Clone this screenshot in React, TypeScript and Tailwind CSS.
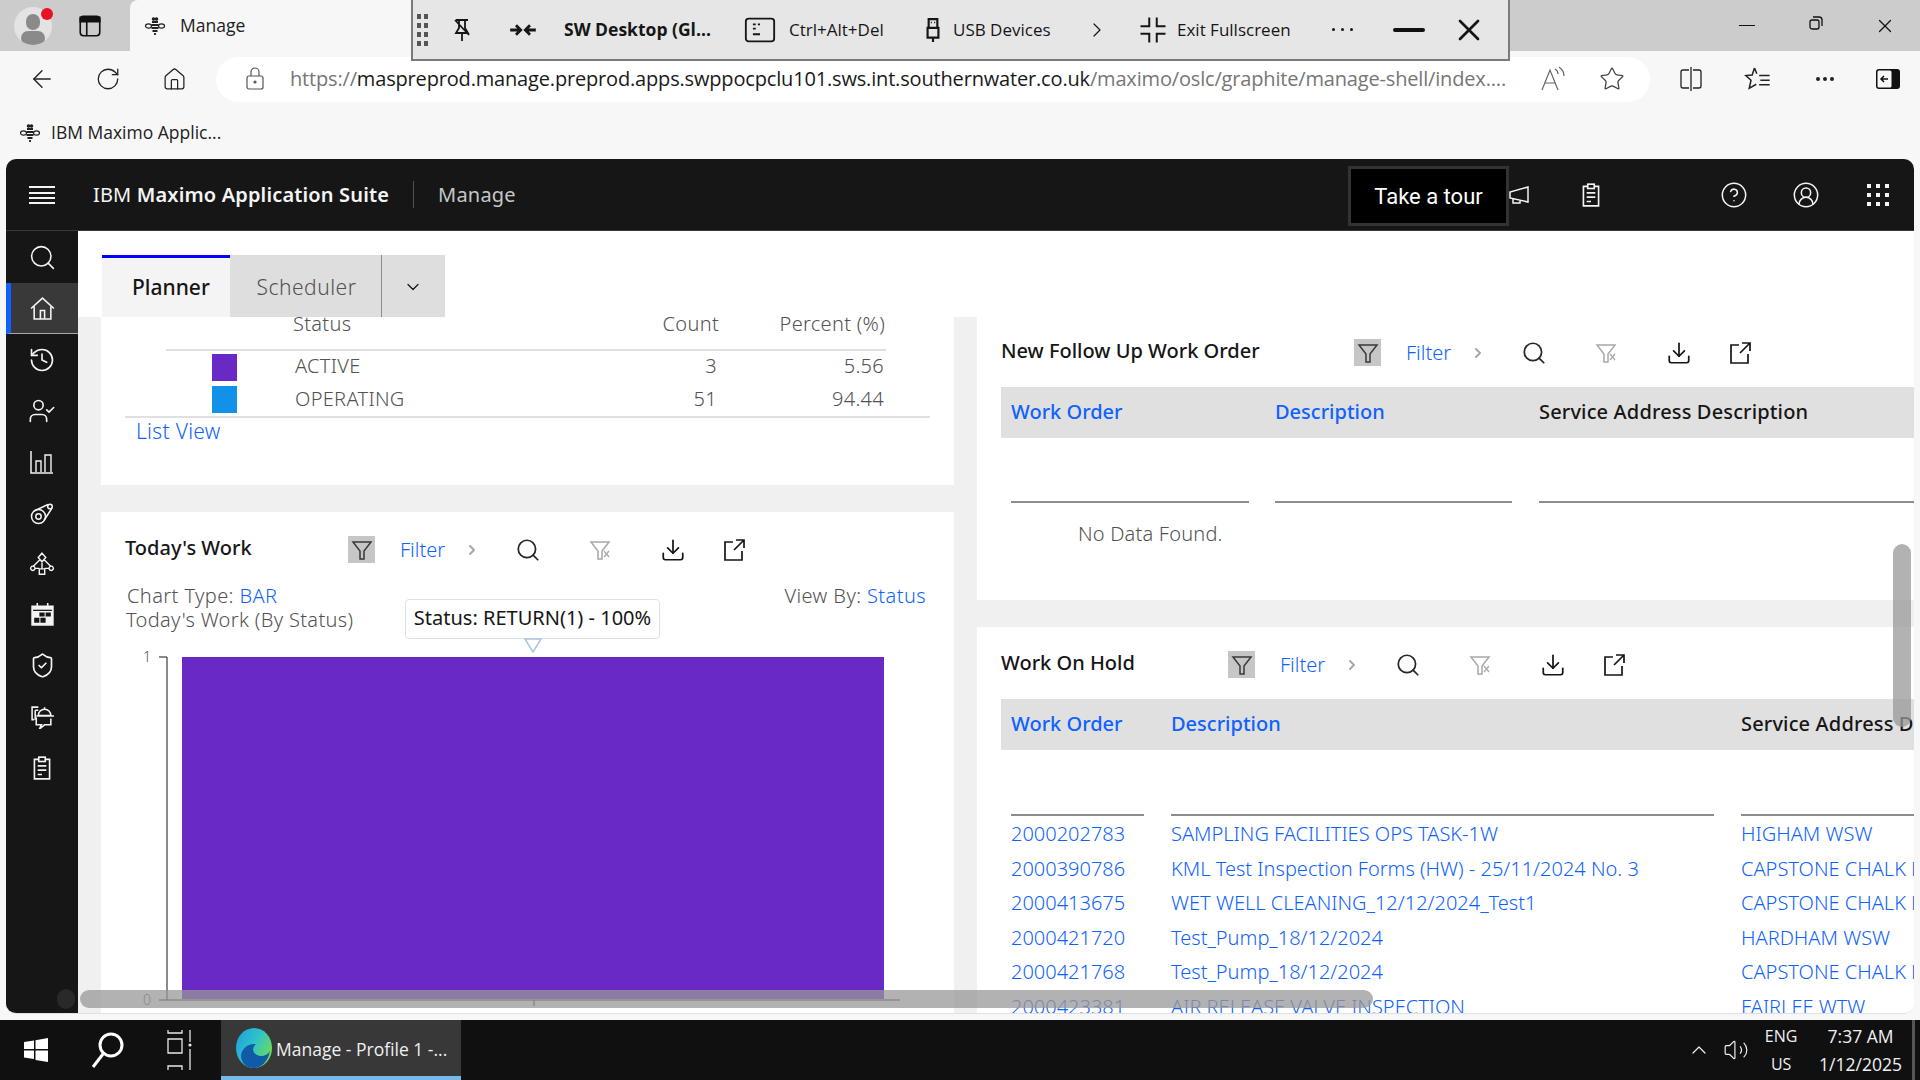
import type { ReactNode } from "react";
import {
  ArrowLeft,
  ChevronDown,
  ChevronRight,
  ChevronUp,
  CircleHelp,
  CircleUserRound,
  Download,
  History,
  Home,
  MoreHorizontal,
  RotateCw,
  Search,
  ShieldCheck,
  Star,
  UserCheck,
  Volume2,
  X,
} from "lucide-react";

const Svg = ({ size = 24, children, className }: { size?: number; children: ReactNode; className?: string }) => (
  <svg width={size} height={size} viewBox="0 0 24 24" fill="none" stroke="currentColor" strokeWidth={1.5} className={className}>
    {children}
  </svg>
);

const Bee = () => (
  <Svg size={24}>
    <g strokeWidth={1.2}>
      <ellipse cx="5.5" cy="12" rx="3" ry="2.2" />
      <ellipse cx="18.5" cy="12" rx="3" ry="2.2" />
      <path d="M9 8h6M8.5 11h7M8.5 14h7M9.5 17h5M12 19v2" strokeWidth={1.8} />
      <circle cx="10.5" cy="5" r="1.2" fill="currentColor" />
      <circle cx="13.5" cy="5" r="1.2" fill="currentColor" />
    </g>
  </Svg>
);

const ClipboardIcon = ({ size = 24 }: { size?: number }) => (
  <Svg size={size}>
    <path d="M9 4H5v18h14V4h-4" />
    <rect x="9" y="2" width="6" height="4" />
    <path d="M8 10h8M8 14h8M8 18h4" />
  </Svg>
);

const sideIcons: ReactNode[] = [
  <Search size={29} strokeWidth={1.3} />,
  <Svg size={25}>
    <path d="M1 12 12 2l11 10M4 10v12h16V10M10 22v-8h4v8" />
  </Svg>,
  <History size={28} strokeWidth={1.4} />,
  <UserCheck size={28} strokeWidth={1.4} />,
  <Svg size={24}>
    <path d="M1 1v22h22" />
    <path d="M6 22V11h5v11M15 22V5h6v17" strokeWidth={1.4} />
  </Svg>,
  <Svg size={24}>
    <circle cx="8.5" cy="15.5" r="7" />
    <circle cx="8.5" cy="15.5" r="2.7" />
    <circle cx="20" cy="5.5" r="2.3" />
    <path d="M4 10 18 3.500M14 19.500 22 7" />
  </Svg>,
  <Svg size={26}>
    <path d="m12 2 3.5 4-3.5 4-3.5-4zM3.500 14a2 2 0 1 0 .01 0M20.500 14a2 2 0 1 0 .01 0M9.500 16.500h5v5h-5zM12 10v6.500M10 8l-6 6M14 8l6 6M5.500 16h4M14.500 16h4" strokeWidth={1.3} />
  </Svg>,
  <Svg size={25}>
    <path d="M2 4h20v18H2z" fill="currentColor" />
    <path d="M7 1v5M17 1v5" />
    <path d="M3 8h18" stroke="#161616" strokeWidth={1.2} />
    <path d="M9 10h5v4H9zM15 10h5v4h-5zM4 15h5v5H4zM10 15h5v5h-5z" fill="#161616" stroke="none" />
  </Svg>,
  <ShieldCheck size={27} strokeWidth={1.5} />,
  <Svg size={25}>
    <path d="M8 3H2v12h2M5 6h3M5 6v9" />
    <path d="M8 11a6 6 0 0 1 12 0zM6 11.500h17M14 5V3" />
    <path d="M6 13v7h5l-2 4 5-4h6v-6" />
  </Svg>,
  <ClipboardIcon size={26} />,
];

const Sidebar = () => (
  <nav className="w-[72px] shrink-0 bg-[#161616] text-[#f4f4f4] pt-[1px]">
    {sideIcons.map((icon, i) => (
      <div
        key={i}
        className={
          i === 1
            ? "h-[51px] flex items-center justify-center bg-[#393939] border-l-[5px] border-[#0f62fe] border-b border-b-[#a8a8a8] pr-[5px]"
            : "h-[51px] flex items-center justify-center"
        }
      >
        {icon}
      </div>
    ))}
  </nav>
);

const FilterIcon = ({ muted }: { muted?: boolean }) => (
  <Svg size={24}>
    <path d="M3 4h18l-7 9v8h-4v-8z" />
    {muted && <path d="m16 13 5 6M21 13l-5 6" strokeWidth={1.2} />}
  </Svg>
);

const LaunchIcon = ({ className }: { className?: string }) => (
  <Svg size={24} className={className}>
    <path d="M11 4H3v18h17v-9M14 2h8v8M22 2 12 12" strokeWidth={1.7} />
  </Svg>
);

const ActionBar = () => (
  <div className="flex items-center h-[27px]">
    <div className="w-[27px] h-[27px] bg-[#c6c6c6] text-[#393939] flex items-center justify-center">
      <FilterIcon />
    </div>
    <span className="ml-[25px] w-[64px] text-[20px] leading-[27px] text-[#0f62fe] font-light">Filter</span>
    <ChevronRight size={16} strokeWidth={3} className="text-[#a8a8a0]" />
    <Search size={26} strokeWidth={1.6} className="ml-[35px] text-[#262626]" />
    <span className="ml-[47px] text-[#a8a8a8]">
      <FilterIcon muted />
    </span>
    <Download size={26} strokeWidth={1.6} className="ml-[48px] text-[#161616]" />
    <LaunchIcon className="ml-[36px] text-[#161616]" />
  </div>
);

const CardTitle = ({ title, width }: { title: string; width: string }) => (
  <div className="flex items-center h-[27px]">
    <h3 className={`${width} mb-[3px] text-[20px] font-medium text-[#161616] leading-[24px]`}>{title}</h3>
    <ActionBar />
  </div>
);

const statusRows = [
  { color: "bg-[#6929c4]", name: "ACTIVE", count: "3", percent: "5.56" },
  { color: "bg-[#1192e8]", name: "OPERATING", count: "51", percent: "94.44" },
];

const StatusCard = () => (
  <section className="h-[168px] bg-white text-[20px] tracking-[0.3px] font-light text-[#525252] shrink-0">
    <div className="mx-[24px] border-b-2 border-[#e0e0e0]">
      <div className="ml-[41px] w-[720px] h-[34px] border-b-2 border-[#e0e0e0] grid grid-cols-[127px_426px_166px] items-start leading-[14px]">
        <div className="col-start-2 flex justify-between">
          <span>Status</span>
          <span>Count</span>
        </div>
        <span className="text-right">Percent (%)</span>
      </div>
      {statusRows.map((r) => (
        <div key={r.name} className="ml-[41px] w-[720px] h-[32.5px] grid grid-cols-[127px_425px_166px] items-center">
          <div className={`ml-[46px] w-[25px] h-[27px] ${r.color}`} />
          <div className="flex justify-between pl-[2px] pr-[1px] pb-[2px]">
            <span>{r.name}</span>
            <span>{r.count}</span>
          </div>
          <span className="text-right pb-[2px]">{r.percent}</span>
        </div>
      ))}
    </div>
    <a className="block ml-[35px] leading-[27px] text-[21px] text-[#0f62fe]">List View</a>
  </section>
);

const ChartCard = () => (
  <section className="relative flex-1 mt-[27px] bg-white pt-[24px] pl-[24px] text-[20px] font-light text-[#525252]">
    <CardTitle title="Today's Work" width="w-[223px]" />
    <div className="mt-[21px] ml-[2px] mr-[28px] flex justify-between leading-[24px] tracking-[0.4px]">
      <span>
        Chart Type: <span className="text-[#0f62fe]">BAR</span>
      </span>
      <span>
        View By: <span className="text-[#0f62fe]">Status</span>
      </span>
    </div>
    <div className="ml-[1px] leading-[24px] tracking-[0.35px]">Today's Work (By Status)</div>
    <svg width="770" height="360" className="absolute left-[39px] top-[138px]">
      <rect x="42" y="7" width="702" height="342" fill="#6929c4" />
      <path d="M19 7h8V350M19 350H760M394 350v6" stroke="#161616" strokeWidth="1" fill="none" />
      <text x="3" y="12" fontSize="14" fill="#525252" fontFamily="Noto Sans">1</text>
      <text x="3" y="355" fontSize="14" fill="#525252" fontFamily="Noto Sans">0</text>
    </svg>
    <div className="absolute left-[304px] top-[87px] w-[255px] h-[40px] pb-[3px] bg-white border border-[#e0e0e0] rounded-[4px] flex items-center justify-center text-[20px] font-normal text-[#161616] whitespace-nowrap">
      Status: RETURN(1) - 100%
    </div>
    <svg width="20" height="15" className="absolute left-[422px] top-[126px]">
      <path d="M2 1h16l-8 13z" fill="#fff" stroke="#a9c6e0" strokeWidth="1.5" />
    </svg>
  </section>
);

const ColHead = ({ children, blue }: { children: ReactNode; blue?: boolean }) => (
  <span className={blue ? "pb-[2px] text-[#0f62fe] font-medium whitespace-nowrap" : "pb-[2px] text-[#161616] font-medium tracking-[0.15px] whitespace-nowrap"}>{children}</span>
);

const FollowUpCard = () => (
  <section className="h-[283px] shrink-0 bg-white pt-[22px] pl-[24px] overflow-hidden">
    <CardTitle title="New Follow Up Work Order" width="w-[353px]" />
    <div className="mt-[21px] h-[51px] bg-[#e0e0e0] pl-[10px] text-[20px] grid grid-cols-[264px_264px_1fr] items-center">
      <ColHead blue>Work Order</ColHead>
      <ColHead blue>Description</ColHead>
      <ColHead>Service Address Description</ColHead>
    </div>
    <div className="pl-[10px] h-[65px] grid grid-cols-[264px_264px_1fr] items-end">
      <div className="w-[238px] border-b-2 border-[#8d8d8d]" />
      <div className="w-[237px] border-b-2 border-[#8d8d8d]" />
      <div className="border-b-2 border-[#8d8d8d]" />
    </div>
    <p className="ml-[77px] mt-[16px] text-[20px] tracking-[0.2px] font-light text-[#525252]">No Data Found.</p>
  </section>
);

const holdRows = [
  ["2000202783", "SAMPLING FACILITIES OPS TASK-1W", "HIGHAM WSW"],
  ["2000390786", "KML Test Inspection Forms (HW) - 25/11/2024 No. 3", "CAPSTONE CHALK BEDS"],
  ["2000413675", "WET WELL CLEANING_12/12/2024_Test1", "CAPSTONE CHALK BEDS"],
  ["2000421720", "Test_Pump_18/12/2024", "HARDHAM WSW"],
  ["2000421768", "Test_Pump_18/12/2024", "CAPSTONE CHALK BEDS"],
  ["2000423381", "AIR RELEASE VALVE INSPECTION", "FAIRLEE WTW"],
];

const HoldCard = () => (
  <section className="flex-1 min-h-0 mt-[27px] bg-white pt-[24px] pl-[24px] overflow-hidden">
    <CardTitle title="Work On Hold" width="w-[227px]" />
    <div className="mt-[21px] h-[51px] bg-[#e0e0e0] pl-[10px] text-[20px] grid grid-cols-[160px_570px_1fr] items-center overflow-hidden">
      <ColHead blue>Work Order</ColHead>
      <ColHead blue>Description</ColHead>
      <ColHead>Service Address Description</ColHead>
    </div>
    <div className="pl-[10px] h-[66px] grid grid-cols-[160px_570px_1fr] items-end">
      <div className="w-[133px] border-b-2 border-[#8d8d8d]" />
      <div className="w-[543px] border-b-2 border-[#8d8d8d]" />
      <div className="border-b-2 border-[#8d8d8d]" />
    </div>
    <div className="pt-[1px] text-[20px] font-light text-[#0f62fe]">
      {holdRows.map((row) => (
        <div key={row[0]} className="pl-[10px] h-[34.5px] grid grid-cols-[160px_570px_1fr] items-center whitespace-nowrap overflow-hidden">
          <span>{row[0]}</span>
          <span>{row[1]}</span>
          <span>{row[2]}</span>
        </div>
      ))}
    </div>
  </section>
);

const AppFrame = () => (
  <div className="mx-[6px] h-[855px] rounded-[10px] overflow-hidden flex flex-col relative bg-white border-b border-[#e0e0e0] font-['Noto_Sans',sans-serif]">
    <header className="h-[72px] shrink-0 bg-[#161616] border-b border-[#393939] flex items-center text-[#f4f4f4]">
      <div className="w-[72px] flex justify-center">
        <svg width="26" height="20" viewBox="0 0 26 20" stroke="currentColor" strokeWidth="2">
          <path d="M0 2h26M0 8h26M0 13h26M0 18h26" />
        </svg>
      </div>
      <span className="ml-[15px] text-[20px] tracking-[0.15px] whitespace-nowrap">
        IBM <span className="font-semibold">Maximo Application Suite</span>
      </span>
      <div className="ml-[24px] w-px h-[27px] bg-[#525252]" />
      <span className="ml-[24px] text-[20px] tracking-[0.2px] text-[#c6c6c6]">Manage</span>
      <div className="ml-auto flex items-center">
        <svg width="24" height="24" viewBox="0 0 24 24" fill="none" stroke="currentColor" strokeWidth="1.5" className="mr-[47px]">
          <path d="M21 4v15L3 15V9zM6 16v4h7v-2" />
        </svg>
        <ClipboardIcon size={26} />
        <CircleHelp size={28} strokeWidth={1.3} className="ml-[116px]" />
        <CircleUserRound size={28} strokeWidth={1.3} className="ml-[44px]" />
        <div className="ml-[47px] mr-[25px] grid grid-cols-3 gap-[5px]">
          {Array.from({ length: 9 }).map((_, i) => (
            <span key={i} className="w-[4px] h-[4px] bg-[#f4f4f4]" />
          ))}
        </div>
      </div>
    </header>
    <div className="flex-1 flex min-h-0">
      <Sidebar />
      <main className="flex-1 min-w-0 flex flex-col">
        <div className="h-[86px] shrink-0 bg-white flex items-end pl-[24px]">
          <div className="flex h-[62px] text-[21px]">
            <div className="w-[128px] pl-[30px] bg-[#f4f4f4] border-t-[3px] border-[#0000ff] flex items-center font-medium text-[#161616]">
              Planner
            </div>
            <div className="w-[152px] pl-[2px] pt-[3px] bg-[#dedede] border-r border-[#8d8d8d] flex items-center justify-center font-light text-[#525252] tracking-[0.5px]">
              Scheduler
            </div>
            <div className="w-[63px] h-[63px] pr-[2px] bg-[#dedede] flex items-center justify-center text-[#161616]">
              <ChevronDown size={20} strokeWidth={1.5} />
            </div>
          </div>
        </div>
        <div className="flex-1 min-h-0 bg-[#f0f0f0] pl-[23px] flex gap-[23px] overflow-hidden">
          <div className="w-[853px] shrink-0 flex flex-col">
            <StatusCard />
            <ChartCard />
          </div>
          <div className="flex-1 min-w-0 flex flex-col">
            <FollowUpCard />
            <HoldCard />
          </div>
        </div>
      </main>
    </div>
  </div>
);

const TopToolbar = () => (
  <div className="absolute left-[411px] top-0 w-[1099px] h-[61px] bg-[#e6e6e6] border-x-2 border-b-2 border-[#7a7a7a] flex items-center text-[#161616] text-[17px] font-['Open_Sans',sans-serif] z-10">
    <div className="ml-[4px] grid grid-cols-2 gap-x-[3px] gap-y-[4px]">
      {Array.from({ length: 8 }).map((_, i) => (
        <span key={i} className="w-[4px] h-[5px] bg-[#555]" />
      ))}
    </div>
    <Svg size={24} className="ml-[22px]">
      <path d="M6 2h12M9 2v8l-3 5h12l-3-5V2M12 15v8M5 2l14 15" strokeWidth={1.8} />
    </Svg>
    <Svg size={28} className="ml-[35px]">
      <path d="M1 12h8M6 8l4 4-4 4M23 12h-8M18 8l-4 4 4 4" strokeWidth={2.4} />
    </Svg>
    <span className="ml-[27px] w-[149px] font-bold text-[17.500px] whitespace-nowrap">SW Desktop (Gl...</span>
    <Svg size={34} className="ml-[30px]">
      <rect x="2" y="4" width="20" height="16" rx="2" strokeWidth={1.3} />
      <path d="M7 8h2M10.500 8H12M7 11h2M7 15h5" strokeWidth={1.3} />
    </Svg>
    <span className="ml-[12px] w-[100px] whitespace-nowrap">Ctrl+Alt+Del</span>
    <Svg size={26} className="ml-[31px]">
      <path d="M8 2h8v8H8zM7 10h10v9H7zM12 19v4" strokeWidth={2} />
      <path d="M10 5h1M13 5h1" strokeWidth={1.4} />
    </Svg>
    <span className="ml-[7px] w-[100px] whitespace-nowrap">USB Devices</span>
    <ChevronRight size={24} strokeWidth={1.2} className="ml-[32px]" />
    <Svg size={30} className="ml-[29px]">
      <path d="M9 2v7H2M15 2v7h7M9 22v-7H2M15 22v-7h7" strokeWidth={1.6} />
    </Svg>
    <span className="ml-[9px] w-[112px] whitespace-nowrap">Exit Fullscreen</span>
    <span className="ml-[43px] flex gap-[6px]">
      <i className="w-[3px] h-[3px] bg-[#161616] rounded-full" />
      <i className="w-[3px] h-[3px] bg-[#161616] rounded-full" />
      <i className="w-[3px] h-[3px] bg-[#161616] rounded-full" />
    </span>
    <span className="ml-[40px] w-[32px] h-[4px] bg-[#111] rounded-full" />
    <X size={36} strokeWidth={1.8} className="ml-[26px]" />
  </div>
);

const BrowserTabs = () => (
  <div className="h-[51px] shrink-0 bg-[#cccccc] flex items-center relative">
    <div className="w-[66px] flex justify-center">
      <div className="w-[38px] h-[38px] rounded-full bg-[#e3e3e3] overflow-hidden relative flex flex-col items-center">
        <span className="mt-[7px] w-[14px] h-[16px] rounded-full bg-[#8a8a8a]" />
        <span className="mt-[1px] w-[24px] h-[14px] rounded-full bg-[#8a8a8a]" />
      </div>
    </div>
    <span className="absolute left-[41px] top-[8px] w-[12px] h-[12px] rounded-full bg-[#e81123]" />
    <Svg size={26} className="ml-[11px] text-[#111]">
      <rect x="3" y="3" width="18" height="18" rx="3" />
      <path d="M3 4h18v4H3z" fill="currentColor" />
      <path d="M9 8v13" />
    </Svg>
    <div className="ml-[27px] w-[500px] h-[51px] bg-[#f7f7f7] rounded-t-[8px] flex items-center pl-[13px] text-[17.500px] text-[#222]">
      <Bee />
      <span className="ml-[13px]">Manage</span>
    </div>
    <div className="ml-auto flex text-[#111]">
      <div className="w-[69px] flex justify-center"><span className="w-[16px] h-[1.5px] bg-[#111] self-center" /></div>
      <div className="w-[69px] flex justify-center">
        <svg width="16" height="16" viewBox="0 0 16 16" fill="none" stroke="currentColor" strokeWidth="1.3">
          <rect x="2" y="5" width="9" height="9" rx="2" />
          <path d="M5 2h6a3 3 0 0 1 3 3v6" />
        </svg>
      </div>
      <div className="w-[70px] flex justify-center"><X size={22} strokeWidth={1.3} /></div>
    </div>
  </div>
);

const AddressBar = () => (
  <div className="h-[56px] shrink-0 flex items-center bg-[#f7f7f7] text-[#222]">
    <div className="w-[75px] flex justify-center pl-[9px]"><ArrowLeft size={28} strokeWidth={1.2} /></div>
    <div className="w-[66px] flex justify-center"><RotateCw size={26} strokeWidth={1.2} /></div>
    <div className="w-[66px] flex justify-center"><Home size={25} strokeWidth={1.2} /></div>
    <div className="ml-[9px] w-[1434px] h-[45px] bg-white rounded-full flex items-center text-[20px] font-['Open_Sans',sans-serif] whitespace-nowrap overflow-hidden">
      <svg width="20" height="24" viewBox="0 0 20 24" fill="none" stroke="#555" strokeWidth="1.2" className="ml-[29px]">
        <rect x="2" y="9" width="16" height="13" rx="2" />
        <path d="M6 9V5a4 4 0 0 1 8 0v4" />
        <circle cx="10" cy="15" r="1" fill="#555" />
      </svg>
      <span className="ml-[25px] w-[1218px] overflow-hidden tracking-[-0.17px]">
        <span className="text-[#767676]">https://</span>
        <span className="text-[#1a1a1a]">maspreprod.manage.preprod.apps.swppocpclu101.sws.int.southernwater.co.uk</span>
        <span className="text-[#767676]">/maximo/oslc/graphite/manage-shell/index....</span>
      </span>
      <svg width="28" height="26" viewBox="0 0 28 26" fill="none" stroke="#666" strokeWidth="1.2" className="ml-[31px]">
        <path d="M3 24 11 4l8 20M6 17h10M16 3c2 1 3 3 3 5M20 1c3 2 5 5 5 9" />
      </svg>
      <Star size={26} strokeWidth={1.2} className="ml-[32px] text-[#444]" />
    </div>
    <svg width="26" height="26" viewBox="0 0 26 26" fill="none" stroke="currentColor" strokeWidth="1.3" className="ml-[28px]">
      <path d="M11 4H5a2 2 0 0 0-2 2v14a2 2 0 0 0 2 2h6M15 4h6a2 2 0 0 1 2 2v14a2 2 0 0 1-2 2h-6M13 1v24" />
    </svg>
    <svg width="28" height="28" viewBox="0 0 24 24" fill="none" stroke="currentColor" strokeWidth="1.3" className="ml-[40px]">
      <path d="M9 2.500 7 8.500 1.500 9l4.500 4-1.500 7 6-3.500M13 9h9M14 13h8M13 17h9M9 2.500l2 5" />
    </svg>
    <MoreHorizontal size={24} strokeWidth={2} className="ml-[41px]" />
    <svg width="26" height="24" viewBox="0 0 26 24" className="ml-[38px]">
      <rect x="1" y="2" width="24" height="20" rx="3" fill="#111" />
      <rect x="2.500" y="3.500" width="14" height="17" rx="1.500" fill="#f7f7f7" />
      <path d="M13 12H6M9 9l-3 3 3 3" stroke="#111" strokeWidth="1.500" fill="none" />
    </svg>
  </div>
);

const Taskbar = () => (
  <footer className="h-[60px] shrink-0 bg-[#101010] flex items-center text-[#f0f0f0] font-['Open_Sans',sans-serif] relative">
    <svg width="26" height="26" viewBox="0 0 26 26" fill="#fff" className="ml-[23px]">
      <path d="M1 5l10-1.500V12H1zM12.500 3.200 25 1v11H12.500zM1 13.500h10V22L1 20.500zM12.500 13.500H25V25l-12.500-2z" />
    </svg>
    <svg width="36" height="38" viewBox="0 0 36 38" fill="none" stroke="#fff" strokeWidth="3" className="ml-[41px]">
      <circle cx="21" cy="14" r="11" />
      <path d="M13 23 3 36" />
    </svg>
    <svg width="26" height="42" viewBox="0 0 26 42" fill="none" stroke="#e8e8e8" strokeWidth="1.3" className="ml-[41px]">
      <path d="M1 1v3h14V1M1 10h14v14H1zM1 41v-4h14v4M23 1v12M23 20v21" />
      <circle cx="23" cy="16" r="1.600" fill="#e8e8e8" stroke="none" />
    </svg>
    <div className="ml-[28px] w-[240px] h-[60px] bg-[#383838] border-b-[4px] border-[#76b9ed] flex items-center pl-[15px]">
      <svg width="36" height="40" viewBox="0 0 36 40" className="shrink-0">
        <defs>
          <linearGradient id="edgeTop" x1="0" y1="0" x2="1" y2="0.6">
            <stop offset="0" stopColor="#1b9de2" />
            <stop offset="0.55" stopColor="#2fc3c9" />
            <stop offset="1" stopColor="#6fdb57" />
          </linearGradient>
        </defs>
        <ellipse cx="18" cy="20" rx="18" ry="20" fill="url(#edgeTop)" />
        <path d="M34 23c-3 5-9 6-13 4-5-2-5-8-1-11-8-1-15 5-15 12 0 5 4 12 13 12 8 0 14-7 16-17z" fill="#0f5ba8" />
      </svg>
      <span className="ml-[4px] mt-[2px] text-[17.500px] whitespace-nowrap">Manage - Profile 1 -...</span>
    </div>
    <div className="ml-auto flex items-center h-full">
      <ChevronUp size={24} strokeWidth={1.2} />
      <Volume2 size={26} strokeWidth={1.1} className="ml-[12px]" />
      <div className="ml-[12px] w-[40px] text-center text-[16px] leading-[28px]">
        <div>ENG</div>
        <div>US</div>
      </div>
      <div className="ml-[18px] text-center text-[17.500px] leading-[28px]">
        <div>7:37 AM</div>
        <div>1/12/2025</div>
      </div>
      <div className="ml-[10px] mr-[5px] w-[3px] h-full bg-[#555]" />
    </div>
  </footer>
);

export default function App() {
  return (
    <div className="w-[1920px] h-[1080px] relative overflow-hidden flex flex-col bg-[#f7f7f7] font-['Open_Sans',sans-serif]">
      <BrowserTabs />
      <AddressBar />
      <div className="h-[52px] shrink-0 flex items-center pl-[18px] text-[17.500px] text-[#222]">
        <Bee />
        <span className="ml-[9px] -mt-[2px]">IBM Maximo Applic...</span>
      </div>
      <AppFrame />
      <div className="h-[6px] shrink-0" />
      <Taskbar />

      <TopToolbar />
      {/* tour popover and overlay scrollbars sit on top of the page */}
      <div className="absolute left-[1348px] top-[166px] w-[161px] h-[60px] bg-black border-[3px] border-[#333] flex items-center justify-center text-white text-[22px] font-['Roboto',sans-serif]">
        Take a tour
      </div>
      <div className="absolute left-[80px] top-[990px] w-[1293px] h-[18px] rounded-[9px] bg-[#989898]/75" />
      <div className="absolute left-[57px] top-[989px] w-[18px] h-[20px] rounded-full bg-[#555]/30" />
      <div className="absolute left-[1893px] top-[544px] w-[18px] h-[183px] rounded-[9px] bg-[#989898]/75" />
    </div>
  );
}
